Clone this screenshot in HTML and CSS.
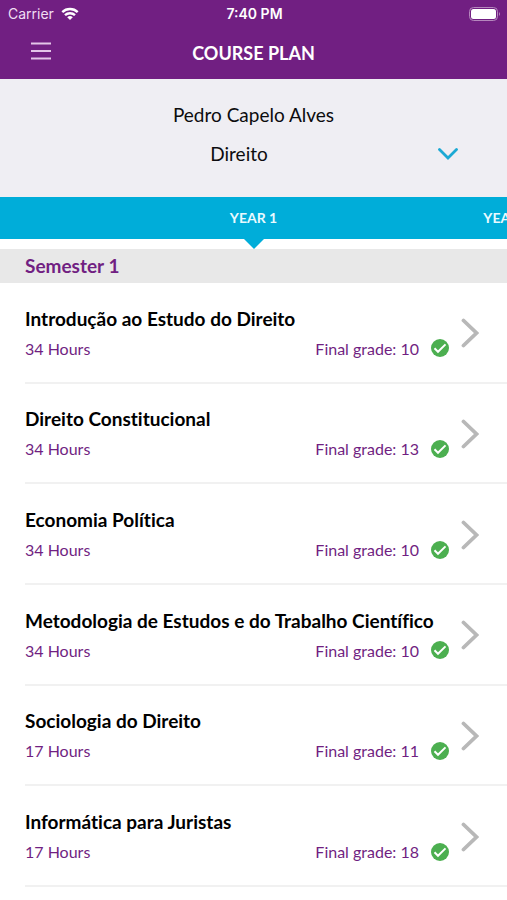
FILE: index.html
```html
<!DOCTYPE html>
<html lang="en">
<head>
<meta charset="utf-8">
<meta name="viewport" content="width=device-width, initial-scale=1">
<title>Course Plan</title>
<link rel="stylesheet" href="styles.css">
</head>
<body>
<svg class="sprite" aria-hidden="true">
  <symbol id="check" viewBox="0 0 18 18">
    <circle cx="9" cy="9" r="9" fill="#4caf50"/>
    <path d="M3.500 9.300l3.500 3.500L14.500 5.400" fill="none" stroke="#fff" stroke-width="2"/>
  </symbol>
  <symbol id="chevron" viewBox="0 0 18 30">
    <path d="M2.500 2.500L15.500 15 2.500 27.500" fill="none" stroke="#b8b8b8" stroke-width="3.800" stroke-linecap="round" stroke-linejoin="miter"/>
  </symbol>
</svg>
<header class="header">
  <div class="status">
    <span class="carrier">Carrier
      <svg width="18" height="14" viewBox="0 0 18 14" aria-hidden="true">
        <g fill="none" stroke="#fff" stroke-width="2.400">
          <path d="M1.300 5.100a11 11 0 0 1 15.400 0"/>
          <path d="M4 8.200a7.200 7.200 0 0 1 10 0"/>
        </g>
        <path d="M6.200 10.200a4.200 4.200 0 0 1 5.600 0L9 13z" fill="#fff"/>
      </svg>
    </span>
    <time class="clock">7:40 PM</time>
    <svg class="battery" width="32" height="14" viewBox="0 0 32 14" aria-hidden="true">
      <rect x=".5" y=".5" width="28" height="13" rx="4" fill="none" stroke="#b587bd"/>
      <rect x="2" y="2" width="25" height="10" rx="2.500" fill="#fff"/>
      <path d="M30 5a2.500 2.500 0 0 1 0 4z" fill="#b587bd"/>
    </svg>
  </div>
  <div class="navbar">
    <button class="menu" type="button" aria-label="Menu">
      <svg width="20" height="18" viewBox="0 0 20 18" aria-hidden="true">
        <path d="M0 1.500h20M0 9h20M0 16.500h20" stroke="#e3c5e8" stroke-width="1.800"/>
      </svg>
    </button>
    <h1 class="title">COURSE PLAN</h1>
  </div>
</header>
<main class="main">
  <section class="student">
    <p class="name">Pedro Capelo Alves</p>
    <div class="picker">
      <select class="course-select" aria-label="Course"><option>Direito</option></select>
      <svg class="picker-arrow" width="20" height="12" viewBox="0 0 20 12" aria-hidden="true">
        <path d="M1.500 1.500L10 10l8.500-8.500" fill="none" stroke="#1ba9d4" stroke-width="2.800" stroke-linecap="round"/>
      </svg>
    </div>
  </section>
  <nav class="years" aria-label="Years">
    <div class="track">
      <a class="year" href="#year-1" aria-current="page">YEAR 1</a>
      <a class="year" href="#year-2">YEAR 2</a>
    </div>
  </nav>
  <h2 class="semester">Semester 1</h2>
  <ul class="courses">
    <li class="row"><a class="course" href="#c1"><span class="course-name">Introdução ao Estudo do Direito</span><span class="hours">34 Hours</span><span class="grade">Final grade: 10</span><svg class="check"><use href="#check"/></svg><svg class="chevron"><use href="#chevron"/></svg></a></li>
    <li class="row"><a class="course" href="#c2"><span class="course-name">Direito Constitucional</span><span class="hours">34 Hours</span><span class="grade">Final grade: 13</span><svg class="check"><use href="#check"/></svg><svg class="chevron"><use href="#chevron"/></svg></a></li>
    <li class="row"><a class="course" href="#c3"><span class="course-name">Economia Política</span><span class="hours">34 Hours</span><span class="grade">Final grade: 10</span><svg class="check"><use href="#check"/></svg><svg class="chevron"><use href="#chevron"/></svg></a></li>
    <li class="row"><a class="course" href="#c4"><span class="course-name">Metodologia de Estudos e do Trabalho Científico</span><span class="hours">34 Hours</span><span class="grade">Final grade: 10</span><svg class="check"><use href="#check"/></svg><svg class="chevron"><use href="#chevron"/></svg></a></li>
    <li class="row"><a class="course" href="#c5"><span class="course-name">Sociologia do Direito</span><span class="hours">17 Hours</span><span class="grade">Final grade: 11</span><svg class="check"><use href="#check"/></svg><svg class="chevron"><use href="#chevron"/></svg></a></li>
    <li class="row"><a class="course" href="#c6"><span class="course-name">Informática para Juristas</span><span class="hours">17 Hours</span><span class="grade">Final grade: 18</span><svg class="check"><use href="#check"/></svg><svg class="chevron"><use href="#chevron"/></svg></a></li>
  </ul>
</main>
</body>
</html>
```
FILE: styles.css
```css
* { box-sizing: border-box; }

body {
  margin: 0;
  min-height: 100vh;
  display: flex;
  flex-direction: column;
  background: #fff;
  color: #0c0c0e;
  font-family: Lato, "Open Sans", sans-serif;
  font-variant-ligatures: none;
}

a { color: inherit; text-decoration: none; }
h1, h2, p, ul { margin: 0; padding: 0; }
.sprite { position: absolute; width: 0; height: 0; }

.header { background: #711f82; color: #fff; }

.status {
  display: grid;
  grid-template-columns: 1fr auto 1fr;
  align-items: center;
  height: 27px;
  padding: 0 6px 0 8px;
  font: 14px/27px Inter, sans-serif;
}
.carrier { display: flex; align-items: center; gap: 7px; color: #f0def3; }
.clock { font-weight: 600; }
.battery { justify-self: end; }

.navbar {
  display: grid;
  grid-template-columns: 82px 1fr 82px;
  align-items: center;
  height: 52px;
}
.menu {
  display: grid;
  place-items: center;
  height: 48px;
  padding: 0 0 4px;
  border: 0;
  background: none;
}
.title { font-size: 18px; line-height: 24px; font-weight: 700; text-align: center; }

.main { flex: 1; display: flex; flex-direction: column; padding-bottom: 13px; }

.student {
  padding: 20px 29px 23px;
  background: #efeef3;
  font-size: 19px;
  line-height: 32px;
  text-align: center;
}
.picker { position: relative; margin-top: 3px; }
.course-select {
  display: block;
  width: 100%;
  height: 40px;
  padding: 0 29px 0 0;
  border: 0;
  appearance: none;
  background: none;
  color: inherit;
  font: inherit;
  text-align: center;
  text-align-last: center;
}
.picker-arrow { position: absolute; top: 14px; right: 20px; pointer-events: none; }

.years { overflow: hidden; padding-bottom: 10px; }
.track { display: flex; padding-left: 25%; background: #00add9; }
.year {
  position: relative;
  flex: 0 0 66.667%;
  color: #e9faff;
  font-size: 14px;
  line-height: 42px;
  font-weight: 700;
  text-align: center;
}
.year[aria-current]::after {
  content: "";
  position: absolute;
  top: 100%;
  left: 50%;
  margin-left: -10px;
  border: 10px solid transparent;
  border-top-color: #00add9;
  border-bottom: 0;
}

.semester {
  padding: 0 25px;
  background: #e8e8e8;
  color: #711f82;
  font-size: 19px;
  line-height: 34px;
  font-weight: 700;
}

.courses {
  flex: 1;
  display: grid;
  grid-auto-rows: minmax(100px, 1fr);
  padding-left: 25px;
  list-style: none;
}
.row { display: grid; border-bottom: 2px solid #f1f1f1; }
.course {
  display: grid;
  grid-template-columns: 1fr auto 18px 18px;
  grid-template-rows: 30px 30px;
  align-content: center;
  align-items: center;
  column-gap: 12px;
  padding: 2px 28px 0 0;
}
.course-name {
  grid-column: 1 / 4;
  color: #000;
  font-size: 19px;
  font-weight: 700;
  white-space: nowrap;
}
.hours, .grade { grid-row: 2; color: #711f82; font-size: 16px; }
.grade { grid-column: 2; }
.check { grid-area: 2 / 3; width: 18px; height: 18px; }
.chevron { grid-area: 1 / 4 / 3 / 5; width: 18px; height: 30px; }
```
